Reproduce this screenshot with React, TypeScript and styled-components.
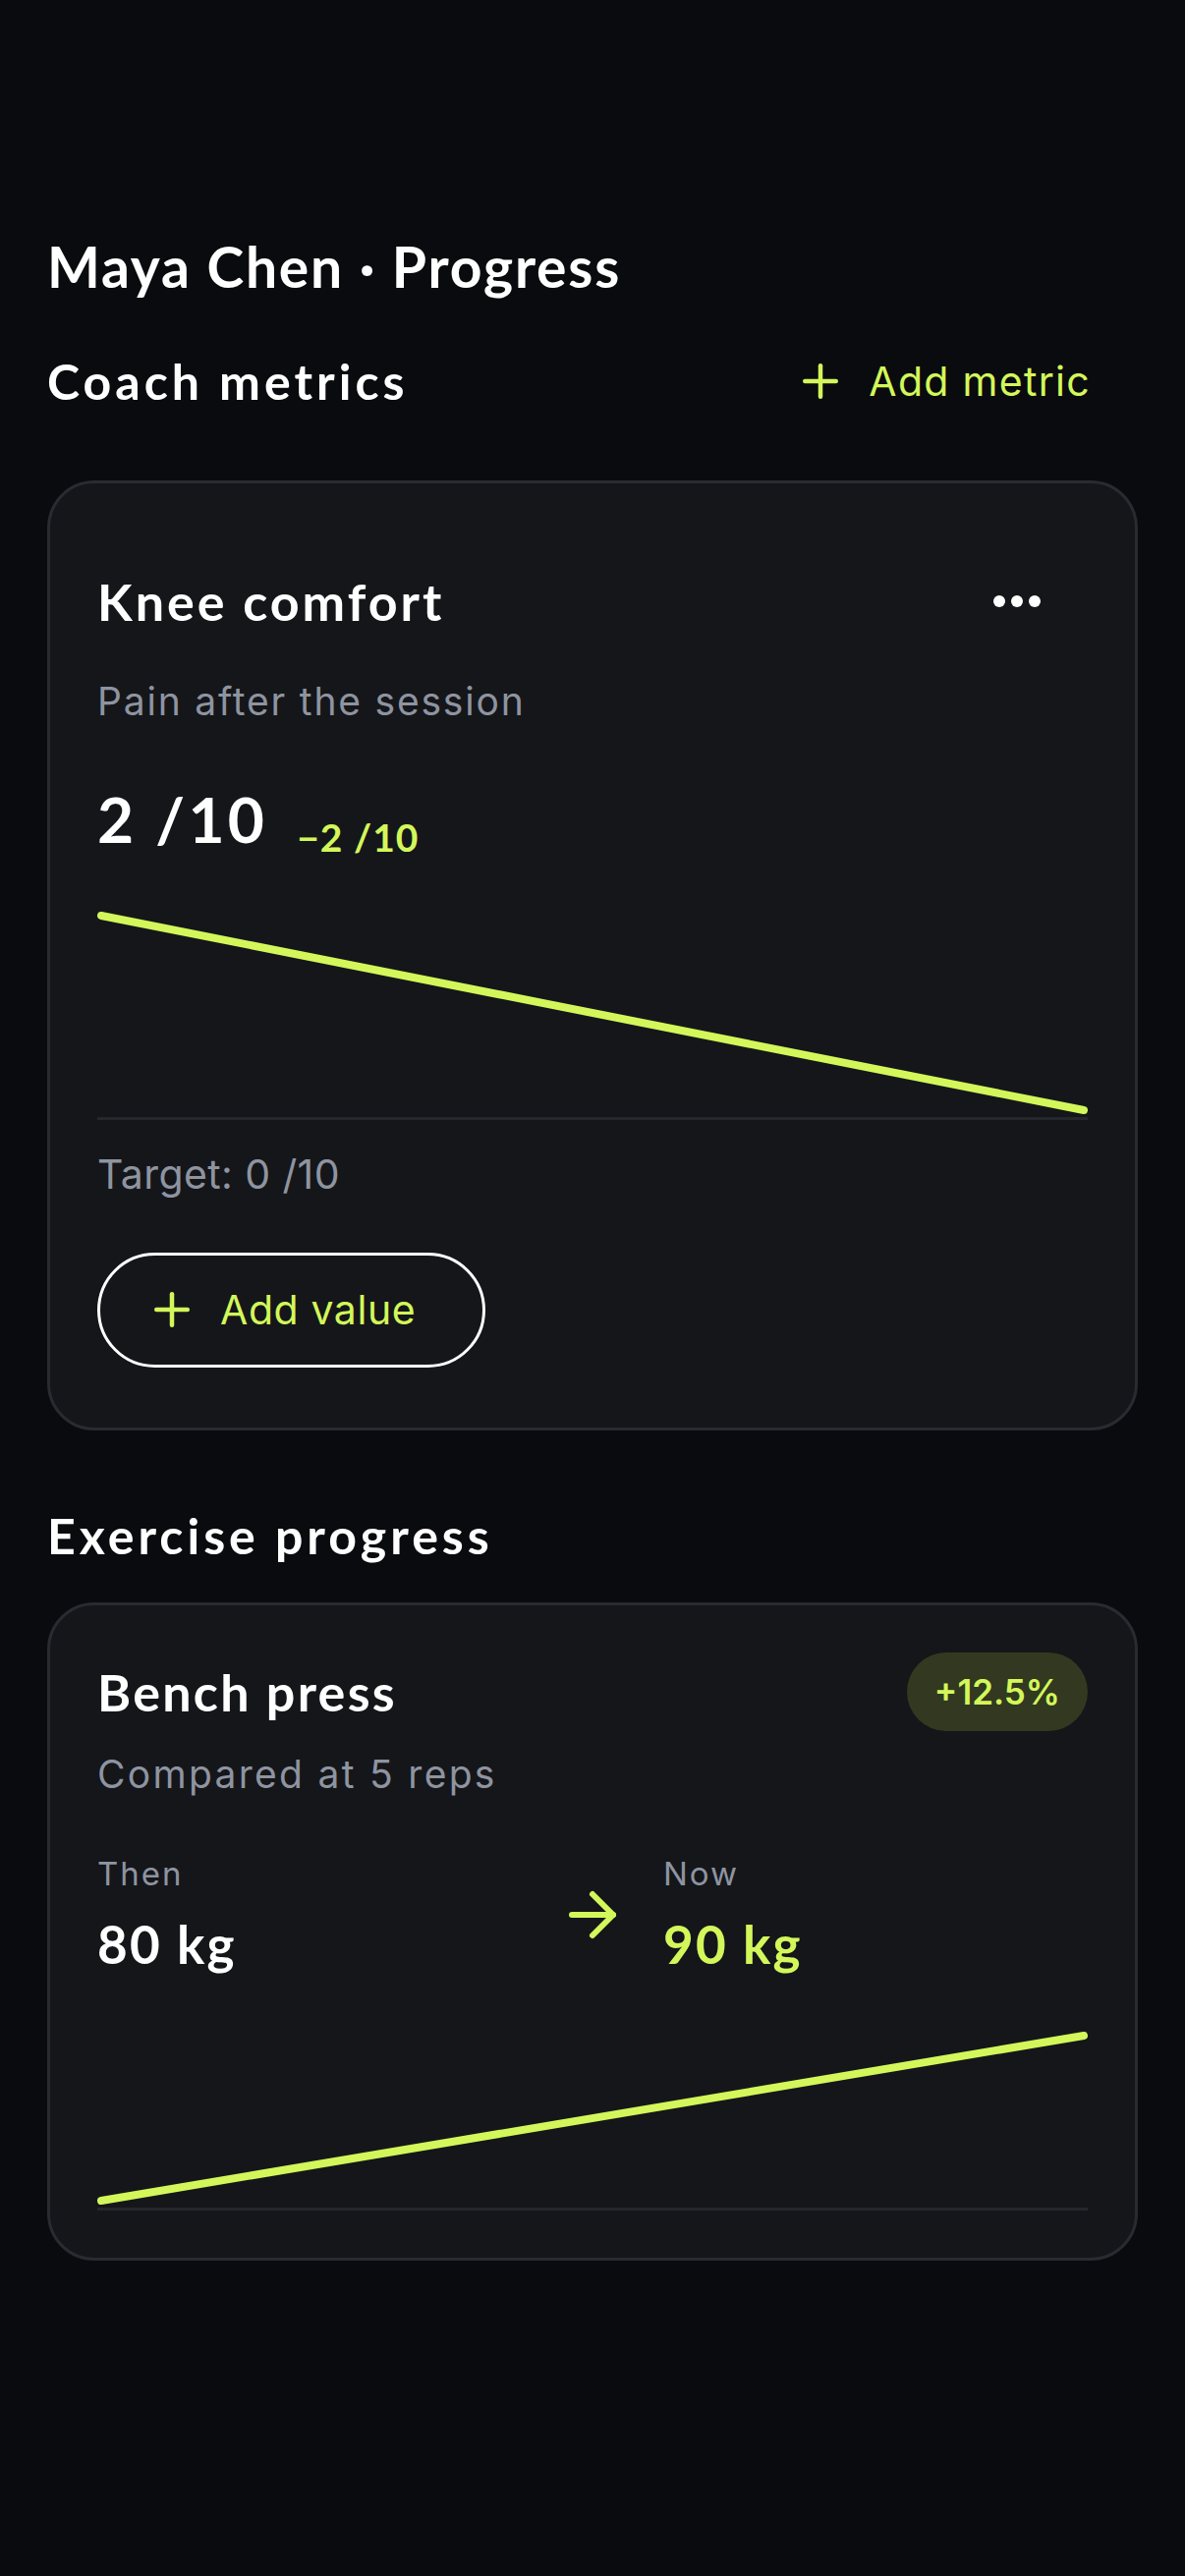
import React from "react";
import styled, { createGlobalStyle } from "styled-components";
import { Plus, ArrowRight } from "lucide-react";

const LIME = "#d3f75a";
const MUTED = "#8e94a0";
const HEAD = `"Lato", "Inter", sans-serif`;
const BODY = `"Inter", "Lato", sans-serif`;

const GlobalStyle = createGlobalStyle`
  html, body {
    margin: 0;
    padding: 0;
    background: #0a0b0f;
  }
  * { box-sizing: border-box; }
`;

const Page = styled.main`
  min-height: 2622px;
  padding: 237px 48px 0;
  display: flex;
  flex-direction: column;
  background: #0a0b0f;
  color: #fff;
`;

const Title = styled.h1`
  margin: 0;
  font-family: ${HEAD};
  font-weight: 700;
  font-size: 57px;
  line-height: 1.2;
  letter-spacing: 1.8px;
`;

const SectionHeader = styled.div<{ $top: number; $bottom: number }>`
  display: flex;
  align-items: center;
  justify-content: space-between;
  margin-top: ${(p) => p.$top}px;
  margin-bottom: ${(p) => p.$bottom}px;
`;

const SectionTitle = styled.h2`
  margin: 0;
  font-family: ${HEAD};
  font-weight: 700;
  font-size: 50px;
  line-height: 1.2;
  letter-spacing: 4px;
`;

const TextButton = styled.button`
  display: flex;
  align-items: center;
  gap: 22px;
  padding: 0 48px 0 0;
  border: none;
  background: none;
  color: ${LIME};
  font-family: ${BODY};
  font-size: 41px;
  line-height: 1.21;
  letter-spacing: 1.3px;
  cursor: pointer;
`;

const Card = styled.section`
  background: #15161a;
  border: 3px solid #2a2b31;
  border-radius: 48px;
  padding: 48px;
  display: flex;
  flex-direction: column;
`;

const CardHeader = styled.div<{ $height?: number }>`
  display: flex;
  align-items: center;
  justify-content: space-between;
  min-height: ${(p) => p.$height ?? 0}px;
`;

const CardTitle = styled.h3<{ $spacing: number }>`
  margin: 0;
  font-family: ${HEAD};
  font-weight: 700;
  font-size: 52px;
  line-height: 1.2;
  letter-spacing: ${(p) => p.$spacing}px;
`;

const IconButton = styled.button`
  width: 144px;
  height: 144px;
  display: flex;
  align-items: center;
  justify-content: center;
  border: none;
  background: none;
  padding: 0;
  cursor: pointer;
`;

const Subtitle = styled.p<{ $top: number; $spacing: number }>`
  margin: ${(p) => p.$top}px 0 0;
  font-family: ${BODY};
  font-size: 39px;
  line-height: 1.21;
  letter-spacing: ${(p) => p.$spacing}px;
  color: ${MUTED};
`;

const ValueRow = styled.div`
  display: flex;
  align-items: flex-end;
  gap: 30px;
  margin-top: 58px;
`;

const BigValue = styled.span`
  font-family: ${HEAD};
  font-weight: 700;
  font-size: 64px;
  line-height: 1.2;
  letter-spacing: 3.3px;
`;

const Delta = styled.span`
  font-family: ${HEAD};
  font-weight: 700;
  font-size: 39px;
  line-height: 1;
  letter-spacing: 1px;
  color: ${LIME};
`;

const Chart = styled.div<{ $top: number }>`
  margin-top: ${(p) => p.$top}px;
  border-bottom: 3px solid #26272c;
  line-height: 0;
`;

const TargetText = styled.p`
  margin: 31px 0 0;
  font-family: ${BODY};
  font-size: 41px;
  line-height: 1.21;
  letter-spacing: 0.4px;
  color: ${MUTED};
`;

const OutlineButton = styled.button`
  margin: 54px 0 13px;
  width: 395px;
  height: 117px;
  display: flex;
  align-items: center;
  gap: 22px;
  padding: 0 0 0 46px;
  border: 3px solid #fff;
  border-radius: 999px;
  background: transparent;
  color: ${LIME};
  font-family: ${BODY};
  font-size: 41px;
  line-height: 1.21;
  letter-spacing: 0.6px;
  cursor: pointer;
`;

const Badge = styled.span`
  height: 80px;
  padding: 0 28px;
  border-radius: 40px;
  display: inline-flex;
  align-items: center;
  background: #323920;
  color: ${LIME};
  font-family: ${BODY};
  font-weight: 600;
  font-size: 35px;
`;

const Compare = styled.div`
  display: grid;
  grid-template-columns: 1fr auto 1fr;
  column-gap: 36px;
  align-items: center;
  margin-top: 59px;
`;

const Stat = styled.div`
  display: flex;
  flex-direction: column;
  gap: 19px;
`;

const StatLabel = styled.span`
  font-family: ${BODY};
  font-size: 33px;
  line-height: 1.21;
  letter-spacing: 2px;
  color: ${MUTED};
`;

const StatValue = styled.span<{ $accent?: boolean }>`
  font-family: ${HEAD};
  font-weight: 700;
  font-size: 53px;
  line-height: 1.2;
  letter-spacing: 2.2px;
  color: ${(p) => (p.$accent ? LIME : "#fff")};
`;

function Dots() {
  return (
    <svg width="48" height="14" viewBox="0 0 48 14" aria-hidden>
      <circle cx="6" cy="7" r="6" fill="#fff" />
      <circle cx="24" cy="7" r="6" fill="#fff" />
      <circle cx="42" cy="7" r="6" fill="#fff" />
    </svg>
  );
}

function TrendLine({ height, from, to }: { height: number; from: number; to: number }) {
  return (
    <svg width="100%" height={height} viewBox={`0 0 1008 ${height}`} preserveAspectRatio="none">
      <line
        x1="4"
        y1={from}
        x2="1004"
        y2={to}
        stroke={LIME}
        strokeWidth="8"
        strokeLinecap="round"
      />
    </svg>
  );
}

export default function App() {
  return (
    <>
      <GlobalStyle />
      <Page>
        <Title>Maya Chen · Progress</Title>

        <SectionHeader $top={53} $bottom={71}>
          <SectionTitle>Coach metrics</SectionTitle>
          <TextButton>
            <Plus size={54} strokeWidth={2} />
            Add metric
          </TextButton>
        </SectionHeader>

        <Card>
          <CardHeader $height={144}>
            <CardTitle $spacing={3}>Knee comfort</CardTitle>
            <IconButton aria-label="More">
              <Dots />
            </IconButton>
          </CardHeader>
          <Subtitle $top={6} $spacing={1.8}>
            Pain after the session
          </Subtitle>
          <ValueRow>
            <BigValue>2 /10</BigValue>
            <Delta>−2 /10</Delta>
          </ValueRow>
          <Chart $top={17}>
            <TrendLine height={248} from={43} to={241} />
          </Chart>
          <TargetText>Target: 0 /10</TargetText>
          <OutlineButton>
            <Plus size={54} strokeWidth={2} />
            Add value
          </OutlineButton>
        </Card>

        <SectionHeader $top={77} $bottom={38}>
          <SectionTitle>Exercise progress</SectionTitle>
        </SectionHeader>

        <Card>
          <CardHeader>
            <CardTitle $spacing={2.3}>Bench press</CardTitle>
            <Badge>+12.5%</Badge>
          </CardHeader>
          <Subtitle $top={20} $spacing={2.3}>
            Compared at 5 reps
          </Subtitle>
          <Compare>
            <Stat>
              <StatLabel>Then</StatLabel>
              <StatValue>80 kg</StatValue>
            </Stat>
            <ArrowRight size={72} strokeWidth={2} color={LIME} />
            <Stat>
              <StatLabel>Now</StatLabel>
              <StatValue $accent>90 kg</StatValue>
            </Stat>
          </Compare>
          <Chart $top={18}>
            <TrendLine height={218} from={211} to={43} />
          </Chart>
        </Card>
      </Page>
    </>
  );
}
